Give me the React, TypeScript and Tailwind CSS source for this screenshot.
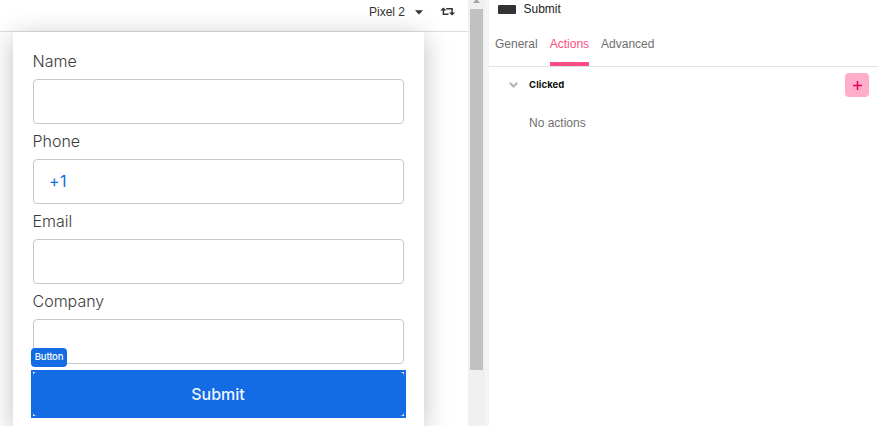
import React from 'react';

const fields = [
  { label: 'Name', value: '' },
  { label: 'Phone', value: '+1' },
  { label: 'Email', value: '' },
  { label: 'Company', value: '' },
];

function RotateIcon() {
  return (
    <svg className="ml-[17px] shrink-0" width="15" height="9" viewBox="0 0 15 9" fill="none" stroke="#333" strokeWidth="1.5">
      <path d="M8.5 7.3H3.4V2.5M6.2 1.7h5.9v4.8" />
      <path d="M0.2 3.6L3.4 0.4l3.2 3.2zM8.9 5.4l3.2 3.2 3.2-3.2z" fill="#333" stroke="none" />
    </svg>
  );
}

function Toolbar() {
  return (
    <div className="flex h-8 shrink-0 items-start border-b border-[#dedede] pl-[369px] pt-[4px] text-[12px] leading-4 text-[#333]">
      <span className="w-[37px] whitespace-nowrap">Pixel 2</span>
      <svg className="ml-[9px] mt-[6px]" width="8" height="5" viewBox="0 0 8 5">
        <path d="M0 0.2h8L4 4.6z" fill="#333" />
      </svg>
      <div className="mt-[3px]">
        <RotateIcon />
      </div>
    </div>
  );
}

function SubmitButton() {
  return (
    <div className="relative -mx-[2px] mt-[6px] h-12 bg-[#136ce4] p-[2px]">
      <div className="h-11 bg-white">
        <button className="block h-11 w-full rounded-[4px] bg-[#136ce4] pr-[1px] font-['Inter',sans-serif] text-[16px] font-medium text-white/95">
          Submit
        </button>
      </div>
      <span className="absolute -top-[22px] left-0 flex h-[19px] w-9 items-center justify-center rounded-[4px] bg-[#136ce4] font-['Inter',sans-serif] text-[9.5px] font-medium tracking-[-0.2px] text-white">
        Button
      </span>
    </div>
  );
}

function Preview() {
  return (
    <div className="flex w-[468px] shrink-0 flex-col">
      <Toolbar />
      <div className="ml-[13px] w-[411px] flex-1 bg-white px-5 pt-3 shadow-[0_5px_25px_rgba(0,0,0,0.25)]">
        {fields.map((field) => (
          <label key={field.label} className="block font-['Inter',sans-serif] text-[16px] font-light text-[#3c3c3c]">
            <span className="-ml-[0.5px] block h-[35px] leading-[35px]">{field.label}</span>
            <span className="flex h-[45px] items-center rounded-[4px] border border-[#c8c8c8] px-[15px] pb-[2px] font-normal tracking-[0.3px] text-[#136ce4]">
              {field.value}
            </span>
          </label>
        ))}
        <SubmitButton />
      </div>
    </div>
  );
}

function Scrollbar() {
  return (
    <div className="relative z-10 flex w-[21px] shrink-0 flex-col border-r-4 border-[#f4f4f4] bg-[#f0f0f0] pl-[2px]">
      <svg className="shrink-0" width="13" height="9" viewBox="0 0 13 9">
        <path d="M3 3l3.5-4L10 3z" fill="#a3a3a3" />
      </svg>
      <div className="h-[361px] w-[13px] bg-[#c1c1c1]" />
    </div>
  );
}

function Inspector() {
  return (
    <div className="relative z-10 flex flex-1 flex-col bg-white text-[12px] text-[#6f6f6f]">
      <div className="flex h-[18px] items-center pl-[9px] text-[#222]">
        <span className="h-[9px] w-[18px] rounded-[1px] bg-[#333]" />
        <span className="ml-[7.5px]">Submit</span>
      </div>
      <div className="flex h-[49px] items-stretch gap-3 border-b border-[#e2e2e2] pl-[6px] pt-[16px] leading-5">
        <span>General</span>
        <span className="-mb-px h-8 border-b-4 border-[#fc4c82] text-[#fc4c82]">Actions</span>
        <span>Advanced</span>
      </div>
      <div className="flex h-9 items-center pl-5 pr-[9px]">
        <svg width="9" height="6" viewBox="0 0 9 6" fill="none" stroke="#b3b3b3" strokeWidth="2">
          <path d="M0.8 0.8l3.7 3.7 3.7-3.7" />
        </svg>
        <span className="ml-[11px] flex-1 pt-px font-['Inter',sans-serif] text-[9.5px] font-bold tracking-[0.1px] text-[#111]">Clicked</span>
        <button className="flex h-6 w-6 items-center justify-center rounded-[4px] bg-[#ffadc8]">
          <svg width="9" height="9" viewBox="0 0 9 9" stroke="#e6005c" strokeWidth="1.5">
            <path d="M4.5 0v9M0 4.5h9" />
          </svg>
        </button>
      </div>
      <p className="ml-10 mt-[11px] leading-[18px]">No actions</p>
    </div>
  );
}

export default function App() {
  return (
    <div className="flex h-[426px] w-[878px] overflow-hidden bg-white font-['Liberation_Sans',Arial,sans-serif]">
      <Preview />
      <Scrollbar />
      <Inspector />
    </div>
  );
}
